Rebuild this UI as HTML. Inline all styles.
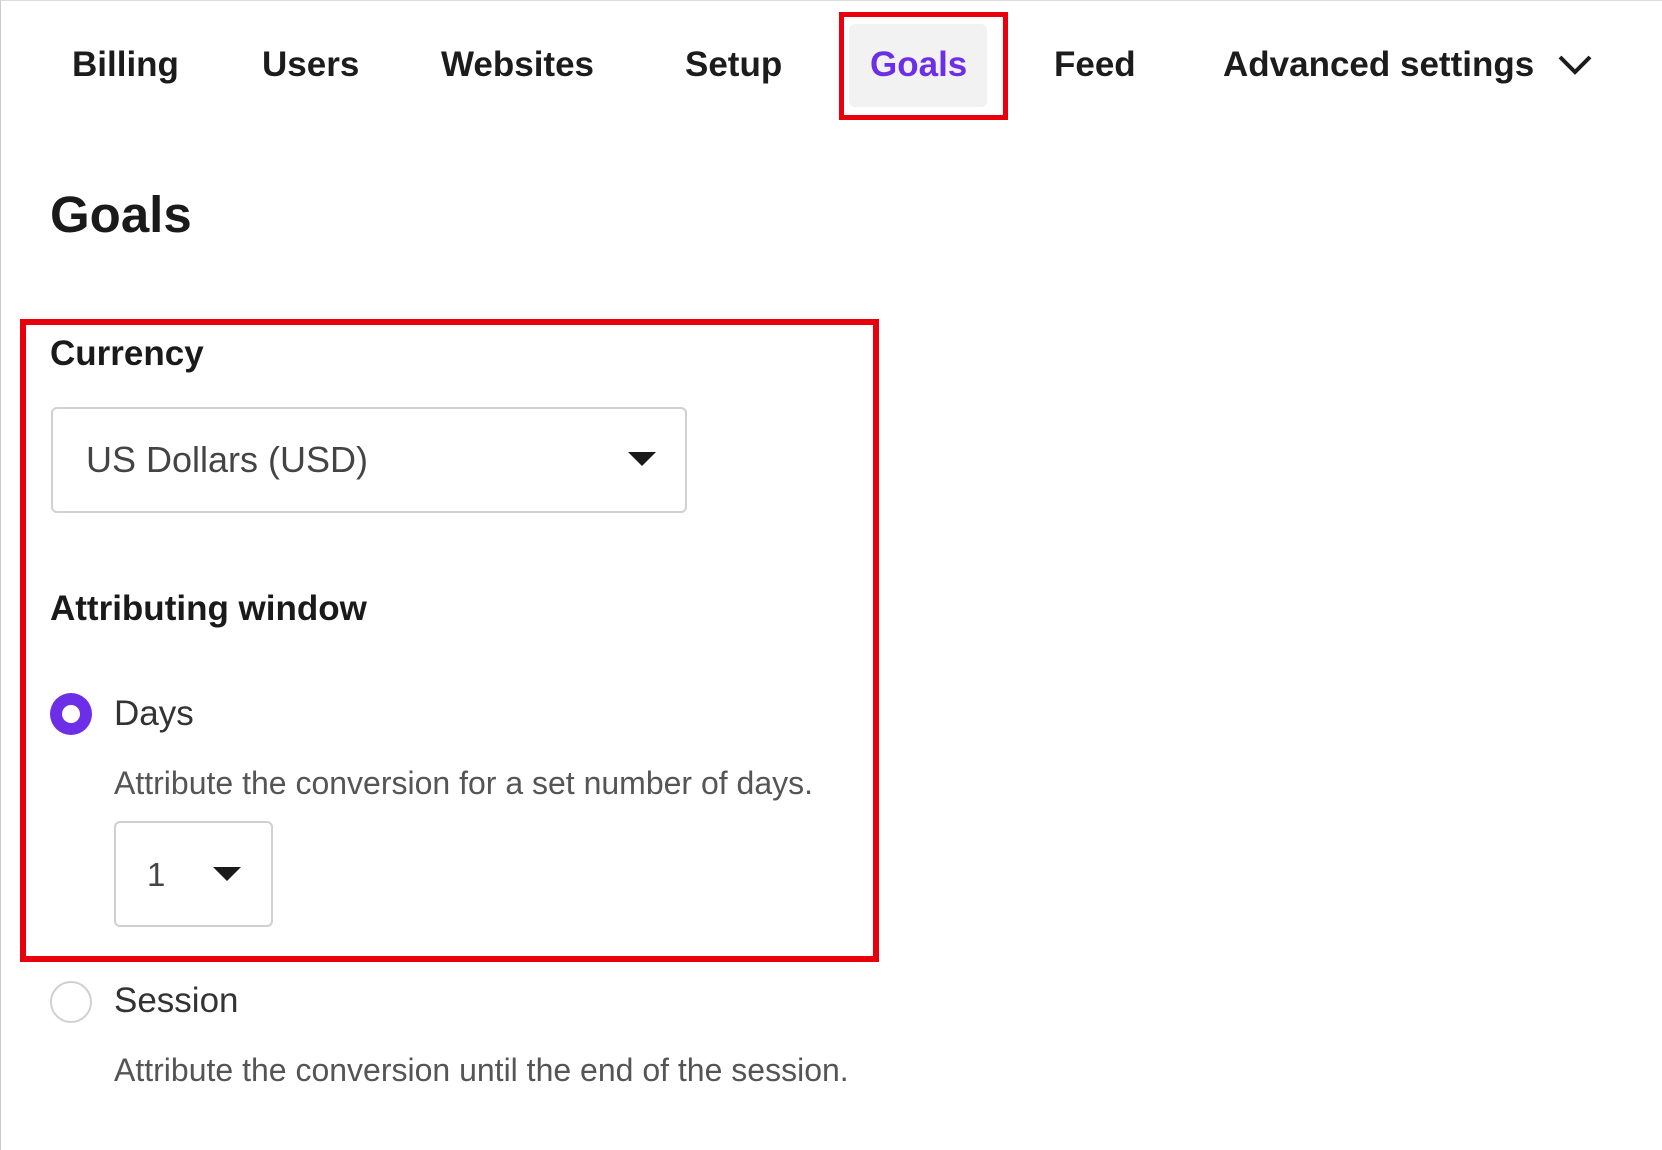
<!DOCTYPE html>
<html><head><meta charset="utf-8"><style>
body{margin:0;width:1662px;height:1150px;background:#fff;font-family:"Liberation Sans",sans-serif;color:#1a1a1a;position:relative;overflow:hidden;border-left:1px solid #ccc;border-top:1px solid #ddd;box-sizing:border-box}
.a{position:absolute;white-space:nowrap}
.nav{font-size:35px;font-weight:600;top:44px;color:#1c1c1c}
</style></head><body>
<div class="a nav" style="left:71px">Billing</div>
<div class="a nav" style="left:261px">Users</div>
<div class="a nav" style="left:440px">Websites</div>
<div class="a nav" style="left:684px">Setup</div>
<div class="a" style="left:848px;top:23px;width:138px;height:83px;background:#f2f2f2;border-radius:6px"></div>
<div class="a" style="left:838px;top:11px;width:159px;height:98px;border:5px solid #e8000d"></div>
<div class="a nav" style="left:869px;color:#6c2ee6">Goals</div>
<div class="a nav" style="left:1053px">Feed</div>
<div class="a nav" style="left:1222px">Advanced settings</div>
<svg class="a" style="left:1556px;top:52px" width="36" height="24"><path d="M3 4 L18 19 L33 4" fill="none" stroke="#1c1c1c" stroke-width="4"/></svg>
<div class="a" style="left:49px;top:184px;font-size:51px;font-weight:700">Goals</div>
<div class="a" style="left:19px;top:318px;width:847px;height:631px;border:6px solid #e8000d"></div>
<div class="a" style="left:49px;top:333px;font-size:35px;font-weight:700">Currency</div>
<div class="a" style="left:50px;top:406px;width:632px;height:102px;border:2px solid #d0d0d0;border-radius:6px"></div>
<div class="a" style="left:85px;top:438px;font-size:36px;color:#444">US Dollars (USD)</div>
<svg class="a" style="left:627px;top:451px" width="28" height="16"><path d="M0 0 H28 L14 14Z" fill="#1a1a1a"/></svg>
<div class="a" style="left:49px;top:588px;font-size:35px;font-weight:700">Attributing window</div>
<div class="a" style="left:49px;top:692px;width:42px;height:42px;border-radius:50%;background:#6c2ee6"></div>
<div class="a" style="left:61px;top:704px;width:18px;height:18px;border-radius:50%;background:#fff"></div>
<div class="a" style="left:113px;top:693px;font-size:35px;color:#333">Days</div>
<div class="a" style="left:113px;top:764px;font-size:32px;color:#555">Attribute the conversion for a set number of days.</div>
<div class="a" style="left:113px;top:820px;width:155px;height:102px;border:2px solid #d0d0d0;border-radius:6px"></div>
<div class="a" style="left:146px;top:855px;font-size:33px;color:#444">1</div>
<svg class="a" style="left:212px;top:866px" width="28" height="16"><path d="M0 0 H28 L14 14Z" fill="#1a1a1a"/></svg>
<div class="a" style="left:49px;top:980px;width:38px;height:38px;border-radius:50%;border:2px solid #d0d0d0"></div>
<div class="a" style="left:113px;top:980px;font-size:35px;color:#333">Session</div>
<div class="a" style="left:113px;top:1051px;font-size:32px;color:#555">Attribute the conversion until the end of the session.</div>
</body></html>
